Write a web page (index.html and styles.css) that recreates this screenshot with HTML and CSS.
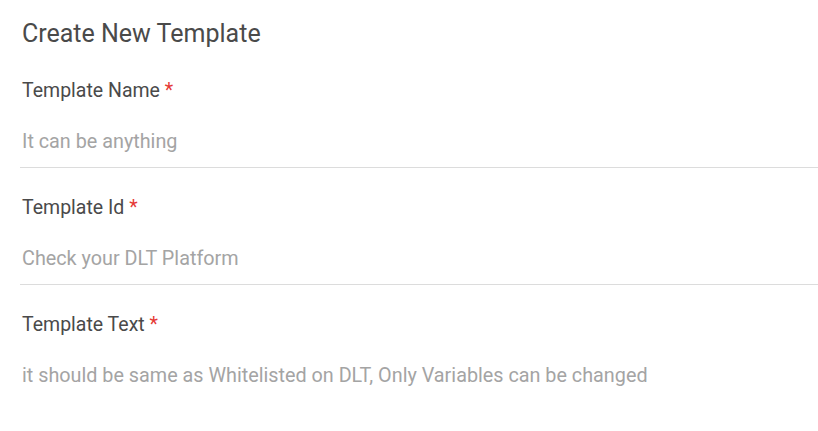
FILE: index.html
```html
<!DOCTYPE html>
<html>
<head>
<meta charset="utf-8"/>
<title>Create New Template</title>
<link rel="stylesheet" href="styles.css">
</head>
<body>

<div class="form">
	<h2 class="title">Create New Template</h2>

	<div class="field">
		<label class="label">Template Name <span class="req">*</span></label>
		<input type="text" class="input" placeholder="It can be anything">
	</div>

	<div class="field">
		<label class="label">Template Id <span class="req">*</span></label>
		<input type="text" class="input" placeholder="Check your DLT Platform">
	</div>

	<div class="field">
		<label class="label">Template Text <span class="req">*</span></label>
		<textarea class="input area" rows="1" placeholder="it should be same as Whitelisted on DLT, Only Variables can be changed"></textarea>
	</div>
</div>

</body>
</html>
```

FILE: styles.css
```css
body {
	margin: 0;
	background: #fff;
	font-family: Roboto, "Noto Sans", sans-serif;
	color: #4a4a4a;
	overflow: hidden;
}
.form {
	padding: 19px 0 0 22px;
}
.title {
	margin: 0;
	font-size: 25px;
	font-weight: 400;
	line-height: 30px;
	color: #4a4a4a;
}
.field {
	margin-top: 30px;
}
.field + .field {
	margin-top: 28px;
}
.label {
	display: block;
	font-size: 19.5px;
	line-height: 24px;
	color: #4a4a4a;
}
.req {
	color: #e53935;
}
.input {
	display: block;
	box-sizing: content-box;
	width: 100%;
	margin: 27px 0 0 -2px;
	padding: 0 0 13px 2px;
	border: 0;
	border-bottom: 1px solid #dcdcdc;
	font-family: Roboto, "Noto Sans", sans-serif;
	font-size: 19.8px;
	line-height: 24px;
	height: 24px;
	color: #4a4a4a;
	background: transparent;
	outline: none;
}
.input::placeholder {
	color: #a4a4a4;
}
.area {
	resize: none;
	overflow: hidden;
	border-bottom: 0;
}
```
